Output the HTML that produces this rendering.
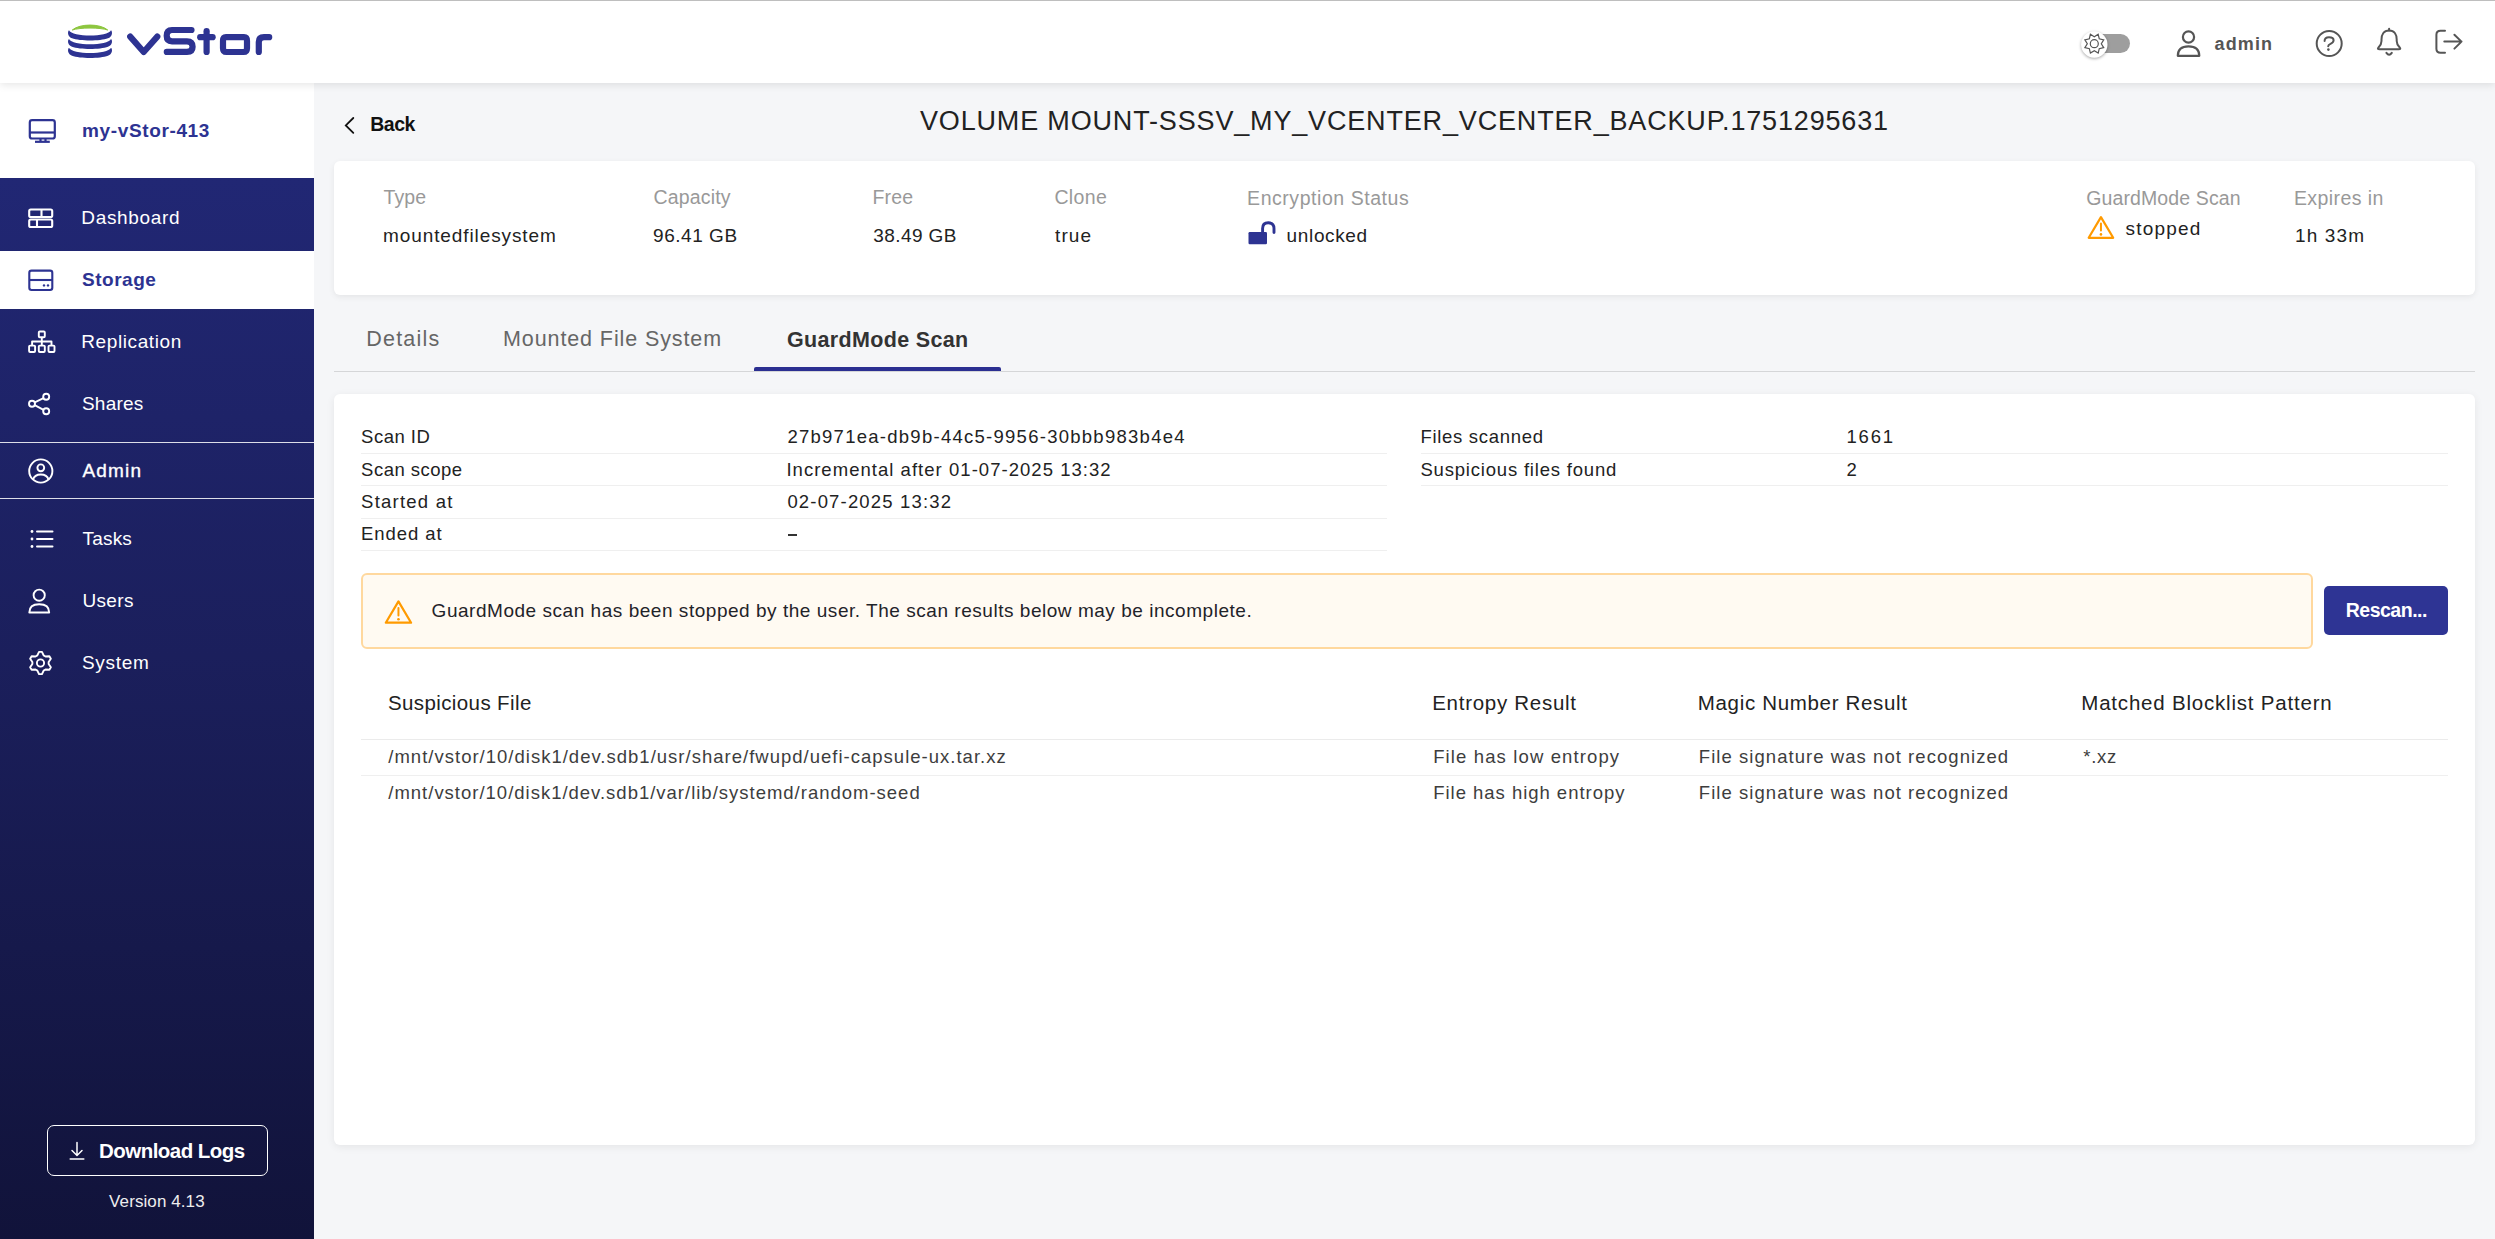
<!DOCTYPE html>
<html><head><meta charset="utf-8"><style>
html,body{margin:0;padding:0;overflow:hidden}
body{width:2495px;height:1239px;overflow:hidden;position:relative;background:#f5f6f8;font-family:"Liberation Sans",sans-serif}
.t{position:absolute;white-space:pre;line-height:1;z-index:6}
svg{z-index:5}
</style></head><body>
<div style="position:absolute;left:0px;top:0px;width:2495px;height:83px;background:#fff;box-shadow:0 2px 8px rgba(0,0,0,0.10);z-index:3"></div>
<div style="position:absolute;left:0px;top:0px;width:2495px;height:1px;background:#bebebe;z-index:10"></div>
<svg style="position:absolute;left:0px;top:0px" width="300" height="83" viewBox="0 0 300 83"><path d="M72.3,30 C80,23.4 100,23.4 107.7,30 C100,27.4 80,27.4 72.3,30 Z" fill="#8dc63f" stroke="#8dc63f" stroke-width="1" stroke-linejoin="round"/><path d="M69,30.2 C72,37.2 108,37.2 111,30.2 C113,32.2 112,36.8 108,38.3 C100,41.3 80,41.3 72,38.3 C68,36.8 67,32.2 69,30.2 Z" fill="#2d3392"/><path d="M69,39.0 C72,46.0 108,46.0 111,39.0 C113,41.0 112,45.2 108,46.7 C100,49.7 80,49.7 72,46.7 C68,45.2 67,41.0 69,39.0 Z" fill="#2d3392"/><path d="M69,47.8 C72,54.8 108,54.8 111,47.8 C113,49.8 112,54.3 108,55.8 C100,58.8 80,58.8 72,55.8 C68,54.3 67,49.8 69,47.8 Z" fill="#2d3392"/>
<g stroke="#2d3392" stroke-width="6.2" fill="none" stroke-linecap="round" stroke-linejoin="round">
<path d="M130.2,36.6 L143.7,52 L157.3,36.6"/>
<path d="M191.5,30 L172,30 Q166.7,30 166.7,35.8 Q166.7,41.3 172,41.3 L187,41.3 Q192.6,41.3 192.6,46.8 Q192.6,51.9 187,51.9 L166.8,51.9"/>
<path d="M206.6,31.2 L206.6,52"/>
<path d="M200.2,37.2 L212.6,37.2"/>
<path d="M226,37.2 L244,37.2 Q247,37.2 247,41 L247,48.2 Q247,52 243.5,52 L226.5,52 Q223,52 223,48.2 L223,41 Q223,37.2 226,37.2 Z"/>
<path d="M258.8,52 L258.8,42 Q258.8,37.2 264,37.2 L269.2,37.2"/>
</g></svg>
<svg style="position:absolute;left:0px;top:0px" width="2495" height="83" viewBox="0 0 2495 83">
<rect x="2094" y="34" width="36" height="19" rx="9.5" fill="#9e9e9e"/>
<circle cx="2094.3" cy="44.5" r="13.2" fill="#fff" style="filter:drop-shadow(0 1px 1.5px rgba(0,0,0,0.35))"/>
<polygon points="2098.20,34.28 2099.25,38.75 2103.72,39.80 2101.30,43.70 2103.72,47.60 2099.25,48.65 2098.20,53.12 2094.30,50.70 2090.40,53.12 2089.35,48.65 2084.88,47.60 2087.30,43.70 2084.88,39.80 2089.35,38.75 2090.40,34.28 2094.30,36.70" fill="none" stroke="#555" stroke-width="1.2" stroke-linejoin="miter"/><circle cx="2094.3" cy="43.7" r="4.0" fill="none" stroke="#555" stroke-width="1.2"/></svg>
<svg style="position:absolute;z-index:4;left:0px;top:0px" width="2495" height="83" viewBox="0 0 2495 83">
<g fill="none" stroke="#555" stroke-width="2.2">
<circle cx="2188.5" cy="37" r="5.6"/>
<path d="M2177.8,55.8 Q2177.8,46.3 2188.5,46.3 Q2199.3,46.3 2199.3,55.8 Z" stroke-linejoin="round"/>
<circle cx="2329.2" cy="43.5" r="12.5" stroke-width="2"/>
<path d="M2324.6,41 Q2324.6,37.3 2329,37.3 Q2333.6,37.3 2333.6,40.3 Q2333.6,42.5 2330.5,43.8 Q2328.2,44.8 2328.2,46.3" stroke-width="2" stroke-linecap="round" stroke-linejoin="round"/>
<path d="M2389.1,30.6 C2383.5,30.6 2381.5,35 2381.5,39.5 L2381.5,41 C2381.5,44.5 2380,46 2378.5,47.5 C2377.3,48.8 2378,49.2 2379.5,49.2 L2398.7,49.2 C2400.2,49.2 2400.9,48.8 2399.7,47.5 C2398.2,46 2396.7,44.5 2396.7,41 L2396.7,39.5 C2396.7,35 2394.7,30.6 2389.1,30.6 Z" stroke-width="2" stroke-linejoin="round"/>
<path d="M2389.1,28.8 L2389.1,30.6" stroke-width="2" stroke-linecap="round"/>
<path d="M2386.4,52.8 Q2389.1,56.6 2391.8,52.8" stroke-width="2" stroke-linecap="round"/>
<path d="M2445,30.8 L2440.5,30.8 Q2436.4,30.8 2436.4,34.8 L2436.4,48.8 Q2436.4,52.8 2440.5,52.8 L2445,52.8" stroke-width="2" stroke-linecap="round" stroke-linejoin="round"/>
<path d="M2444.3,41.6 L2461.5,41.6 M2454.4,34.8 L2461.5,41.6 L2454.4,48.6" stroke-width="2" stroke-linecap="round" stroke-linejoin="round"/>
</g>
<circle cx="2328.4" cy="49.6" r="1.3" fill="#555"/>
</svg>
<div style="position:absolute;left:0px;top:83px;width:314px;height:95px;background:#fff"></div>
<div style="position:absolute;left:0px;top:178px;width:314px;height:1061px;background:linear-gradient(180deg,#212774 0%,#1b1f5c 45%,#11133a 100%)"></div>
<div style="position:absolute;left:0px;top:251px;width:314px;height:58px;background:#fff"></div>
<div style="position:absolute;left:0px;top:442px;width:314px;height:1px;background:rgba(255,255,255,0.85)"></div>
<div style="position:absolute;left:0px;top:498px;width:314px;height:1px;background:rgba(255,255,255,0.85)"></div>
<div style="position:absolute;left:47px;top:1125px;width:221px;height:51px;border:1.5px solid #fff;border-radius:7px;box-sizing:border-box"></div>
<svg style="position:absolute;left:0px;top:0px" width="314" height="1239" viewBox="0 0 314 1239">
<g fill="none" stroke="#2d3392" stroke-width="2.2" stroke-linejoin="round">
<rect x="29.8" y="120.1" width="25" height="18.4" rx="2.3"/>
<path d="M29.8,132.5 L54.8,132.5"/>
<path d="M40.5,138.5 L40.5,141.5 M45.5,138.5 L45.5,141.5"/>
<path d="M35,141.8 L49.8,141.8"/>
</g>
<g fill="none" stroke="#fff" stroke-width="2.1" stroke-linejoin="round">
<rect x="29.2" y="209.5" width="23" height="7.5" rx="1.6"/>
<rect x="29.2" y="219.5" width="23" height="7.5" rx="1.6"/>
<path d="M41.5,209.5 L41.5,217 M37,219.5 L37,227"/>
</g>
<g fill="none" stroke="#2d3392" stroke-width="2.1" stroke-linejoin="round">
<rect x="29.3" y="270.6" width="23" height="19.4" rx="2.2"/>
<path d="M29.3,280 L52.3,280"/>
</g>
<circle cx="44" cy="285.4" r="1.2" fill="#2d3392"/><circle cx="48" cy="285.4" r="1.2" fill="#2d3392"/>
<g fill="none" stroke="#fff" stroke-width="1.9" stroke-linejoin="round">
<rect x="38.8" y="331.5" width="6" height="5.8" rx="1"/>
<rect x="29.1" y="345.6" width="6" height="6.4" rx="1"/>
<rect x="38.8" y="345.6" width="6" height="6.4" rx="1"/>
<rect x="48.5" y="345.6" width="6" height="6.4" rx="1"/>
<path d="M41.8,337.3 L41.8,345.6 M32.1,345.6 L32.1,341.5 L51.5,341.5 L51.5,345.6"/>
</g>
<g fill="none" stroke="#fff" stroke-width="1.9">
<circle cx="46.2" cy="396.8" r="3"/>
<circle cx="32" cy="403.8" r="3"/>
<circle cx="46.2" cy="411.3" r="3"/>
<path d="M34.7,402.4 L43.5,398.2 M34.7,405.2 L43.5,409.8"/>
</g>
<g fill="none" stroke="#fff" stroke-width="1.9">
<circle cx="40.8" cy="471" r="11.6"/>
<circle cx="40.8" cy="467.8" r="3.4"/>
<path d="M33,479.8 Q34.5,474.5 40.8,474.5 Q47.1,474.5 48.6,479.8"/>
</g>
<g stroke="#fff" stroke-width="2" stroke-linecap="round">
<path d="M37,531.5 L52.5,531.5 M37,539 L52.5,539 M37,546.5 L52.5,546.5"/>
</g>
<circle cx="32" cy="531.5" r="1.4" fill="#fff"/><circle cx="32" cy="539" r="1.4" fill="#fff"/><circle cx="32" cy="546.5" r="1.4" fill="#fff"/>
<g fill="none" stroke="#fff" stroke-width="1.9" stroke-linejoin="round">
<circle cx="39.2" cy="595.2" r="5.6"/>
<path d="M29.3,612.5 Q29.3,604.2 39.2,604.2 Q49.2,604.2 49.2,612.5 Z"/>
</g>
<polygon points="39.04,651.90 41.96,651.90 43.64,655.42 45.49,656.49 49.39,656.18 50.85,658.71 48.63,661.93 48.63,664.07 50.85,667.29 49.39,669.82 45.49,669.51 43.64,670.58 41.96,674.10 39.04,674.10 37.36,670.58 35.51,669.51 31.61,669.82 30.15,667.29 32.37,664.07 32.37,661.93 30.15,658.71 31.61,656.18 35.51,656.49 37.36,655.42" fill="none" stroke="#fff" stroke-width="1.9" stroke-linejoin="round"/><circle cx="40.5" cy="663" r="3.6" fill="none" stroke="#fff" stroke-width="1.9"/><g stroke="#fff" stroke-width="1.5" fill="none" stroke-linecap="round">
<path d="M77,1142.5 L77,1155.5 M72,1150.5 L77,1155.5 L82,1150.5"/>
<path d="M70.2,1159 L83.8,1159"/></g></svg>
<div style="position:absolute;left:334px;top:161px;width:2141px;height:134px;background:#fff;border-radius:6px;box-shadow:0 2px 6px rgba(0,0,0,0.07)"></div>
<div style="position:absolute;left:334px;top:371px;width:2141px;height:1px;background:#d5d6d8"></div>
<div style="position:absolute;left:754px;top:367px;width:247px;height:4px;background:#2b2f91;border-radius:2px 2px 0 0"></div>
<div style="position:absolute;left:334px;top:394px;width:2141px;height:751px;background:#fff;border-radius:6px;box-shadow:0 2px 8px rgba(0,0,0,0.07)"></div>
<div style="position:absolute;left:361px;top:453px;width:1026px;height:1px;background:#efefef"></div>
<div style="position:absolute;left:361px;top:485px;width:1026px;height:1px;background:#efefef"></div>
<div style="position:absolute;left:361px;top:518px;width:1026px;height:1px;background:#efefef"></div>
<div style="position:absolute;left:361px;top:550px;width:1026px;height:1px;background:#efefef"></div>
<div style="position:absolute;left:1421px;top:453px;width:1027px;height:1px;background:#efefef"></div>
<div style="position:absolute;left:1421px;top:485px;width:1027px;height:1px;background:#efefef"></div>
<div style="position:absolute;left:361px;top:573px;width:1952px;height:76px;background:#fffaf2;border:2px solid #ffd89e;border-radius:6px;box-sizing:border-box"></div>
<div style="position:absolute;left:2324px;top:586px;width:124px;height:49px;background:#2e3494;border-radius:5px"></div>
<div style="position:absolute;left:361px;top:739px;width:2087px;height:1px;background:#ebebeb"></div>
<div style="position:absolute;left:788px;top:534px;width:9px;height:1.6000000000000227px;background:#333"></div>
<div style="position:absolute;left:361px;top:775px;width:2087px;height:1px;background:#efefef"></div>
<svg style="position:absolute;left:0px;top:0px" width="2495" height="1239" viewBox="0 0 2495 1239">
<path d="M353.3,118 L345.8,125.4 L353.3,132.8" fill="none" stroke="#111" stroke-width="1.8" stroke-linecap="round" stroke-linejoin="miter"/>
<rect x="1248.5" y="232" width="18.5" height="12.3" rx="1.2" fill="#2d3392"/>
<path d="M1262.6,233 L1262.6,228.5 Q1262.6,222.8 1268.3,222.8 Q1274,222.8 1274,228.5 L1274,232.5" fill="none" stroke="#2d3392" stroke-width="2.9" stroke-linecap="round"/>
<path d="M2100.95,217.1 L2113.2,237.8 L2088.7,237.8 Z" fill="none" stroke="#ff9a00" stroke-width="2.2" stroke-linejoin="round"/><path d="M2100.95,223.6 L2100.95,230.5" stroke="#ff9a00" stroke-width="1.9800000000000002" stroke-linecap="round"/><circle cx="2100.95" cy="234.4" r="1.3" fill="#ff9a00"/><path d="M398.45000000000005,601.4 L411.1,622.6999999999999 L385.8,622.6999999999999 Z" fill="none" stroke="#ff9a00" stroke-width="2.2" stroke-linejoin="round"/><path d="M398.45000000000005,607.9 L398.45000000000005,615.4" stroke="#ff9a00" stroke-width="1.9800000000000002" stroke-linecap="round"/><circle cx="398.45000000000005" cy="619.3" r="1.3" fill="#ff9a00"/></svg>
<div class="t" style="left:82.1px;top:121.0px;font-size:19.0px;letter-spacing:0.627px;font-weight:700;color:#2d3392;">my-vStor-413</div>
<div class="t" style="left:81.3px;top:208.1px;font-size:19.0px;letter-spacing:0.662px;font-weight:400;color:#ffffff;">Dashboard</div>
<div class="t" style="left:82.0px;top:269.8px;font-size:19.0px;letter-spacing:0.517px;font-weight:700;color:#2d3392;">Storage</div>
<div class="t" style="left:81.3px;top:332.2px;font-size:19.0px;letter-spacing:0.59px;font-weight:400;color:#ffffff;">Replication</div>
<div class="t" style="left:82.0px;top:394.4px;font-size:19.0px;letter-spacing:0.2px;font-weight:400;color:#ffffff;">Shares</div>
<div class="t" style="left:82.5px;top:461.0px;font-size:19.0px;letter-spacing:1.175px;font-weight:400;color:#ffffff;-webkit-text-stroke:0.35px #fff;">Admin</div>
<div class="t" style="left:82.5px;top:528.8px;font-size:19.0px;letter-spacing:0.2px;font-weight:400;color:#ffffff;">Tasks</div>
<div class="t" style="left:82.5px;top:591.1px;font-size:19.0px;letter-spacing:0.325px;font-weight:400;color:#ffffff;">Users</div>
<div class="t" style="left:82.0px;top:652.8px;font-size:19.0px;letter-spacing:0.68px;font-weight:400;color:#ffffff;">System</div>
<div class="t" style="left:99.1px;top:1140.7px;font-size:20.5px;letter-spacing:-0.55px;font-weight:700;color:#ffffff;">Download Logs</div>
<div class="t" style="left:109.1px;top:1193.1px;font-size:17.0px;letter-spacing:0.091px;font-weight:400;color:#eeeeee;">Version 4.13</div>
<div class="t" style="left:2214.5px;top:34.8px;font-size:18.0px;letter-spacing:1.125px;font-weight:700;color:#555555;">admin</div>
<div class="t" style="left:370.3px;top:115.0px;font-size:19.5px;letter-spacing:-0.533px;font-weight:700;color:#111111;">Back</div>
<div class="t" style="left:920.0px;top:108.0px;font-size:27.0px;letter-spacing:0.834px;font-weight:400;color:#222222;">VOLUME MOUNT-SSSV_MY_VCENTER_VCENTER_BACKUP.1751295631</div>
<div class="t" style="left:383.6px;top:188.3px;font-size:19.5px;letter-spacing:0.067px;font-weight:400;color:#999999;">Type</div>
<div class="t" style="left:653.6px;top:188.3px;font-size:19.5px;letter-spacing:0.157px;font-weight:400;color:#999999;">Capacity</div>
<div class="t" style="left:872.4px;top:188.1px;font-size:19.5px;letter-spacing:0.167px;font-weight:400;color:#999999;">Free</div>
<div class="t" style="left:1054.4px;top:188.1px;font-size:19.5px;letter-spacing:0.375px;font-weight:400;color:#999999;">Clone</div>
<div class="t" style="left:1247.1px;top:189.0px;font-size:19.5px;letter-spacing:0.544px;font-weight:400;color:#999999;">Encryption Status</div>
<div class="t" style="left:2086.2px;top:188.9px;font-size:19.5px;letter-spacing:0.123px;font-weight:400;color:#999999;">GuardMode Scan</div>
<div class="t" style="left:2293.9px;top:188.9px;font-size:19.5px;letter-spacing:0.422px;font-weight:400;color:#999999;">Expires in</div>
<div class="t" style="left:383.1px;top:226.0px;font-size:19.0px;letter-spacing:0.894px;font-weight:400;color:#222222;">mountedfilesystem</div>
<div class="t" style="left:653.1px;top:226.0px;font-size:19.0px;letter-spacing:0.529px;font-weight:400;color:#222222;">96.41 GB</div>
<div class="t" style="left:873.2px;top:226.0px;font-size:19.0px;letter-spacing:0.429px;font-weight:400;color:#222222;">38.49 GB</div>
<div class="t" style="left:1055.0px;top:226.0px;font-size:19.0px;letter-spacing:1.1px;font-weight:400;color:#222222;">true</div>
<div class="t" style="left:1286.6px;top:225.9px;font-size:19.0px;letter-spacing:0.643px;font-weight:400;color:#222222;">unlocked</div>
<div class="t" style="left:2125.6px;top:218.7px;font-size:19.0px;letter-spacing:1.167px;font-weight:400;color:#222222;">stopped</div>
<div class="t" style="left:2295.0px;top:226.3px;font-size:19.0px;letter-spacing:1.14px;font-weight:400;color:#222222;">1h 33m</div>
<div class="t" style="left:366.3px;top:329.0px;font-size:21.5px;letter-spacing:1.2px;font-weight:400;color:#666666;">Details</div>
<div class="t" style="left:503.0px;top:329.0px;font-size:21.5px;letter-spacing:0.9px;font-weight:400;color:#666666;">Mounted File System</div>
<div class="t" style="left:786.9px;top:329.5px;font-size:21.5px;letter-spacing:0.346px;font-weight:700;color:#333333;">GuardMode Scan</div>
<div class="t" style="left:361.1px;top:428.1px;font-size:18.5px;letter-spacing:0.483px;font-weight:400;color:#222222;">Scan ID</div>
<div class="t" style="left:361.1px;top:461.1px;font-size:18.5px;letter-spacing:0.478px;font-weight:400;color:#222222;">Scan scope</div>
<div class="t" style="left:361.1px;top:493.0px;font-size:18.5px;letter-spacing:1.233px;font-weight:400;color:#222222;">Started at</div>
<div class="t" style="left:361.1px;top:525.2px;font-size:18.5px;letter-spacing:0.914px;font-weight:400;color:#222222;">Ended at</div>
<div class="t" style="left:787.4px;top:427.8px;font-size:18.5px;letter-spacing:1.266px;font-weight:400;color:#222222;">27b971ea-db9b-44c5-9956-30bbb983b4e4</div>
<div class="t" style="left:786.4px;top:460.6px;font-size:18.5px;letter-spacing:1.036px;font-weight:400;color:#222222;">Incremental after 01-07-2025 13:32</div>
<div class="t" style="left:787.4px;top:492.6px;font-size:18.5px;letter-spacing:1.173px;font-weight:400;color:#222222;">02-07-2025 13:32</div>
<div class="t" style="left:1420.4px;top:428.0px;font-size:18.5px;letter-spacing:0.708px;font-weight:400;color:#222222;">Files scanned</div>
<div class="t" style="left:1846.5px;top:428.0px;font-size:18.5px;letter-spacing:1.833px;font-weight:400;color:#222222;">1661</div>
<div class="t" style="left:1420.4px;top:461.1px;font-size:18.5px;letter-spacing:0.81px;font-weight:400;color:#222222;">Suspicious files found</div>
<div class="t" style="left:1846.5px;top:461.1px;font-size:18.5px;letter-spacing:1.4px;font-weight:400;color:#222222;">2</div>
<div class="t" style="left:431.6px;top:601.3px;font-size:19.0px;letter-spacing:0.532px;font-weight:400;color:#1f2329;">GuardMode scan has been stopped by the user. The scan results below may be incomplete.</div>
<div class="t" style="left:2345.7px;top:601.2px;font-size:19.5px;letter-spacing:-0.487px;font-weight:700;color:#ffffff;">Rescan...</div>
<div class="t" style="left:387.9px;top:693.1px;font-size:20.5px;letter-spacing:0.4px;font-weight:400;color:#222222;">Suspicious File</div>
<div class="t" style="left:1432.2px;top:693.1px;font-size:20.5px;letter-spacing:0.723px;font-weight:400;color:#222222;">Entropy Result</div>
<div class="t" style="left:1697.8px;top:693.1px;font-size:20.5px;letter-spacing:0.672px;font-weight:400;color:#222222;">Magic Number Result</div>
<div class="t" style="left:2081.3px;top:693.1px;font-size:20.5px;letter-spacing:0.796px;font-weight:400;color:#222222;">Matched Blocklist Pattern</div>
<div class="t" style="left:388.3px;top:748.0px;font-size:18.5px;letter-spacing:1.009px;font-weight:400;color:#3d3d3d;">/mnt/vstor/10/disk1/dev.sdb1/usr/share/fwupd/uefi-capsule-ux.tar.xz</div>
<div class="t" style="left:1433.2px;top:748.0px;font-size:18.5px;letter-spacing:1.126px;font-weight:400;color:#3d3d3d;">File has low entropy</div>
<div class="t" style="left:1698.8px;top:748.0px;font-size:18.5px;letter-spacing:1.053px;font-weight:400;color:#3d3d3d;">File signature was not recognized</div>
<div class="t" style="left:2083.3px;top:748.0px;font-size:18.5px;letter-spacing:0.7px;font-weight:400;color:#3d3d3d;">*.xz</div>
<div class="t" style="left:388.3px;top:784.0px;font-size:18.5px;letter-spacing:0.993px;font-weight:400;color:#3d3d3d;">/mnt/vstor/10/disk1/dev.sdb1/var/lib/systemd/random-seed</div>
<div class="t" style="left:1433.2px;top:784.0px;font-size:18.5px;letter-spacing:0.975px;font-weight:400;color:#3d3d3d;">File has high entropy</div>
<div class="t" style="left:1698.8px;top:784.0px;font-size:18.5px;letter-spacing:1.053px;font-weight:400;color:#3d3d3d;">File signature was not recognized</div>

</body></html>
